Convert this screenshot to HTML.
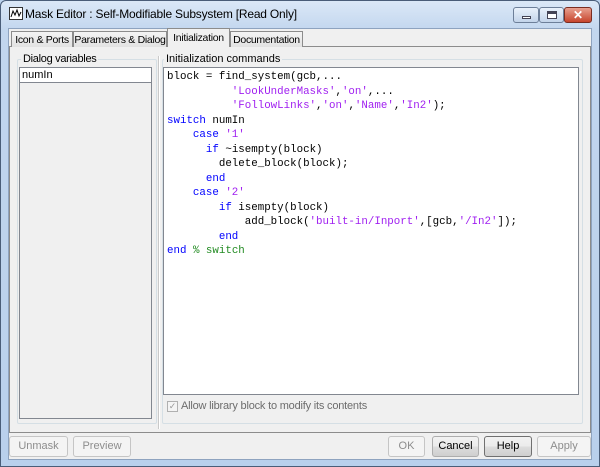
<!DOCTYPE html>
<html><head><style>
*{box-sizing:border-box;margin:0;padding:0}
body{width:600px;height:467px;overflow:hidden;background:#bcd3ee;font-family:"Liberation Sans",sans-serif;font-size:11px;color:#000;position:relative}
.abs{position:absolute}
.frame{left:0;top:0;width:600px;height:467px;background:linear-gradient(#dbe8f7,#c2d6ee 30px,#b9d0ec);border:1px solid #4a5d78;border-radius:6px 6px 0 0}
.client{left:8px;top:28px;width:584px;height:432px;background:#f0f0f0;border:1px solid #8ea3bf}
.tab{top:31px;height:16px;background:linear-gradient(#f4f4f4,#e2e2e2);border:1px solid #8c8c8c;border-bottom:none;padding:2px 0 0;text-align:center;white-space:nowrap;overflow:hidden;font-size:10.5px;letter-spacing:-0.3px}
.panel{left:9px;top:46px;width:582px;height:387px;border:1px solid #8c8c8c;background:#f0f0f0}
.grp{border:1px solid #d5dfe5;border-radius:2px}
.lbl{background:#f0f0f0;padding:0 2px}
.btn{top:436px;height:21px;border:1px solid #adadad;border-radius:3px;background:linear-gradient(#f2f2f2,#ebebeb 50%,#dddddd 51%,#cfcfcf);text-align:center;line-height:19px;color:#000}
.dis{color:#8d8d8d;background:#f4f4f4;border-color:#c5c5c5}
pre{font-family:"Liberation Mono",monospace;font-size:10.8px;line-height:14.5px}
.k{color:#0000ff}.s{color:#a020f0}.c{color:#228b22}
</style></head><body>
<div class="abs frame"></div>
<svg class="abs" style="left:9px;top:7px" width="14" height="13"><rect x="0.5" y="0.5" width="13" height="12" fill="#fff" stroke="#333"/><path d="M2 10 L4 4 L6 8 L8 3 L10 9 L12 5" stroke="#000" fill="none"/></svg>
<div class="abs" style="left:25px;top:7px;font-size:12px;letter-spacing:-0.2px;color:#000">Mask Editor : Self-Modifiable Subsystem [Read Only]</div>
<div class="abs" style="left:513px;top:7px;width:26px;height:16px;border:1px solid #6d7f99;border-radius:3px;background:linear-gradient(#e9f1fb,#c3d4ea)"><div class="abs" style="left:8px;top:8px;width:9px;height:3px;background:#fff;border:1px solid #445"></div></div>
<div class="abs" style="left:539px;top:7px;width:25px;height:16px;border:1px solid #6d7f99;border-radius:3px;background:linear-gradient(#e9f1fb,#c3d4ea)"><div class="abs" style="left:7px;top:3px;width:10px;height:8px;background:#fff;border:1px solid #445;border-top-width:3px"></div></div>
<div class="abs" style="left:564px;top:7px;width:28px;height:16px;border:1px solid #7a2c20;border-radius:3px;background:linear-gradient(#e8a08f,#c7452d);color:#fff;font-weight:bold;text-align:center;line-height:14px;font-size:12px">✕</div>
<div class="abs client"></div>
<div class="abs panel"></div>
<div class="abs tab" style="left:11px;width:62px">Icon &amp; Ports</div>
<div class="abs tab" style="left:73px;width:94px">Parameters &amp; Dialog</div>
<div class="abs tab" style="left:167px;top:28px;height:19px;width:63px;background:#f0f0f0;z-index:2;padding-top:3px">Initialization</div>
<div class="abs tab" style="left:230px;width:73px">Documentation</div>
<div class="abs grp" style="left:17px;top:59px;width:140px;height:365px"></div>
<div class="abs lbl" style="left:21px;top:53px;letter-spacing:-0.3px">Dialog variables</div>
<div class="abs" style="left:19px;top:67px;width:133px;height:352px;border:1px solid #828790;background:#f0f0f0"><div style="background:#fff;height:15px;border-bottom:1px solid #828790;padding:1px 2px">numIn</div></div>
<div class="abs" style="left:158px;top:56px;width:2px;height:373px;border-left:1px solid #c9c9c9;border-right:1px solid #fff"></div>
<div class="abs grp" style="left:162px;top:59px;width:421px;height:365px"></div>
<div class="abs lbl" style="left:164px;top:53px">Initialization commands</div>
<div class="abs" style="left:163px;top:67px;width:416px;height:328px;background:#fff;border:1px solid #828790;padding:2px 3px">
<pre>block = find_system(gcb,...
          <span class="s">'LookUnderMasks'</span>,<span class="s">'on'</span>,...
          <span class="s">'FollowLinks'</span>,<span class="s">'on'</span>,<span class="s">'Name'</span>,<span class="s">'In2'</span>);
<span class="k">switch</span> numIn
    <span class="k">case</span> <span class="s">'1'</span>
      <span class="k">if</span> ~isempty(block)
        delete_block(block);
      <span class="k">end</span>
    <span class="k">case</span> <span class="s">'2'</span>
        <span class="k">if</span> isempty(block)
            add_block(<span class="s">'built-in/Inport'</span>,[gcb,<span class="s">'/In2'</span>]);
        <span class="k">end</span>
<span class="k">end</span> <span class="c">% switch</span></pre></div>
<div class="abs" style="left:167px;top:401px;width:11px;height:11px;border:1px solid #b0b0b0;background:#f4f4f4;color:#999;font-size:9px;line-height:9px;text-align:center">✓</div>
<div class="abs" style="left:181px;top:400px;color:#6d6d6d;letter-spacing:-0.2px">Allow library block to modify its contents</div>
<div class="abs btn dis" style="left:9px;width:59px">Unmask</div>
<div class="abs btn dis" style="left:73px;width:58px">Preview</div>
<div class="abs btn dis" style="left:388px;width:37px">OK</div>
<div class="abs btn" style="left:432px;width:47px">Cancel</div>
<div class="abs btn" style="left:484px;width:48px;border-color:#707070">Help</div>
<div class="abs btn dis" style="left:537px;width:54px">Apply</div>
</body></html>
